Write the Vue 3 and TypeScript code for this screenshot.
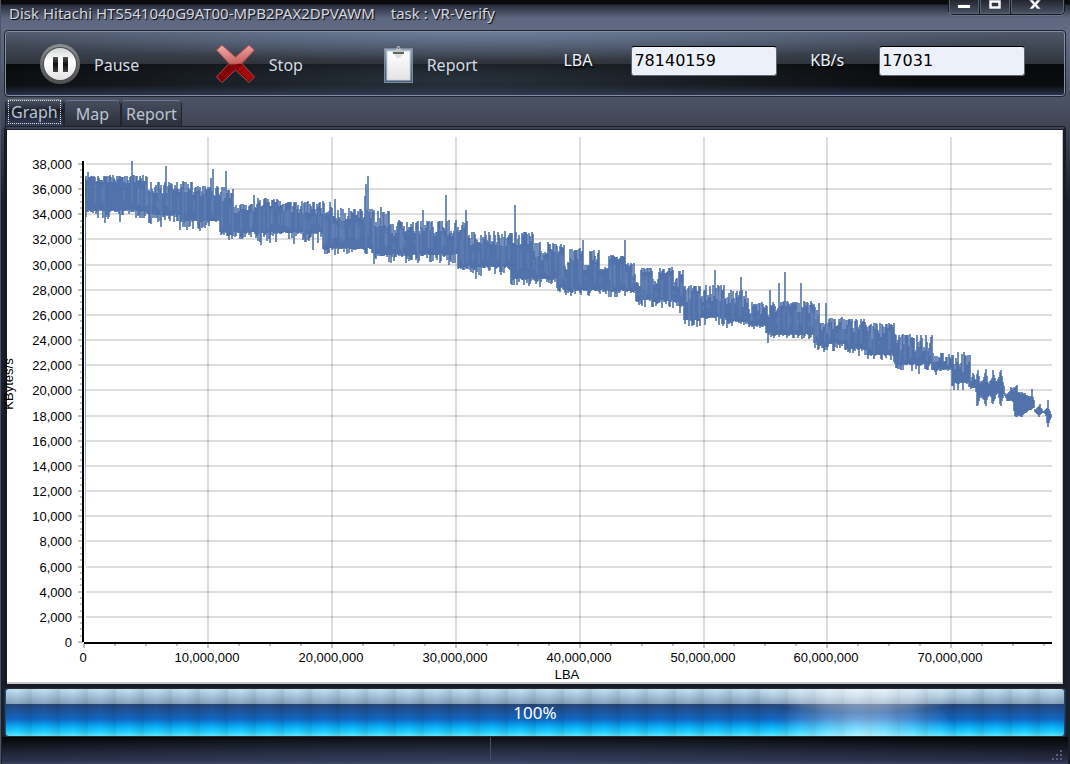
<script setup lang="ts">
import { ref } from 'vue'

type Span = [from: number, to: number, top: number, bottom: number, topNoise: number, bottomNoise: number]
type Bar = [x: number, top: number, bottom: number]

const lba = ref('78140159')
const speed = ref('17031')
const tabs = ['Graph', 'Map', 'Report']
const activeTab = ref('Graph')
const progress = ref(100)

const originX = 77
const baseline = 512
const unitY = 12.58
const unitX = 12.39

const yTicks = Array.from({ length: 20 }, (_, i) => ({
  label: (i * 2000).toLocaleString('en-US'),
  y: Math.round(baseline - i * 2 * unitY),
}))
const xTicks = Array.from({ length: 8 }, (_, i) => ({
  label: (i * 10000000).toLocaleString('en-US'),
  x: Math.round(originX + i * 10 * unitX),
}))
const yMinor = Array.from({ length: 77 }, (_, i) => Math.round(baseline - (i * unitY) / 2))
const xMinor = Array.from({ length: 32 }, (_, i) => Math.round(originX + i * 2.5 * unitX))

const spans: Span[] = [
  [79, 141, 45, 81, 8, 9],
  [141, 173, 51, 85, 14, 10],
  [173, 186, 51, 91, 12, 10],
  [186, 213, 56, 91, 11, 10],
  [213, 222, 56, 103, 15, 6],
  [222, 227, 59, 105, 15, 6],
  [227, 250, 73, 103, 13, 8],
  [250, 272, 68, 103, 9, 11],
  [272, 316, 71, 103, 14, 12],
  [316, 325, 71, 119, 15, 6],
  [325, 367, 78, 119, 14, 7],
  [367, 383, 79, 125, 20, 9],
  [383, 390, 93, 125, 14, 8],
  [390, 451, 90, 125, 17, 9],
  [451, 462, 91, 138, 17, 4],
  [462, 504, 101, 137, 16, 10],
  [504, 527, 101, 149, 16, 8],
  [527, 535, 112, 149, 17, 7],
  [535, 541, 122, 149, 8, 12],
  [541, 550, 112, 149, 14, 6],
  [550, 558, 113, 158, 10, 6],
  [558, 563, 132, 160, 8, 8],
  [563, 576, 118, 160, 12, 7],
  [576, 583, 134, 160, 10, 7],
  [583, 593, 120, 160, 12, 7],
  [593, 602, 137, 160, 3, 6],
  [602, 619, 125, 161, 5, 8],
  [619, 629, 133, 161, 14, 6],
  [629, 634, 146, 172, 10, 7],
  [634, 646, 137, 170, 8, 10],
  [646, 652, 148, 173, 11, 6],
  [652, 667, 137, 171, 7, 8],
  [667, 672, 148, 172, 10, 6],
  [672, 677, 139, 176, 7, 12],
  [677, 694, 155, 190, 18, 9],
  [694, 720, 154, 188, 19, 9],
  [720, 742, 160, 192, 19, 7],
  [742, 759, 172, 196, 14, 5],
  [759, 766, 175, 203, 13, 14],
  [766, 807, 171, 205, 12, 5],
  [807, 813, 172, 213, 18, 9],
  [813, 822, 192, 216, 12, 8],
  [822, 839, 187, 214, 15, 8],
  [839, 860, 188, 219, 15, 8],
  [860, 888, 193, 225, 17, 6],
  [888, 926, 204, 235, 19, 9],
  [926, 945, 222, 240, 13, 6],
  [945, 964, 224, 253, 20, 9],
  [964, 969, 243, 258, 10, 6],
]

const tail: Bar[] = [
  [969, 250, 262], [970, 244, 276], [971, 240, 275], [972, 246, 271], [973, 253, 268], [974, 251, 266],
  [975, 252, 268], [976, 250, 269], [977, 247, 270], [978, 243, 274], [979, 239, 276], [980, 246, 270],
  [981, 252, 267], [982, 254, 266], [983, 251, 265], [984, 250, 267], [985, 248, 273], [986, 240, 274],
  [987, 245, 271], [988, 248, 269], [989, 251, 265], [990, 251, 264], [991, 249, 263], [992, 247, 268],
  [993, 242, 274], [994, 240, 276], [995, 246, 271], [996, 252, 268], [997, 256, 264], [998, 263, 266],
  [999, 265, 268], [1000, 264, 271], [1001, 263, 271], [1002, 262, 271], [1003, 261, 271], [1004, 257, 270],
  [1005, 258, 271], [1006, 260, 272], [1007, 257, 281], [1008, 258, 286], [1009, 256, 287], [1010, 255, 287],
  [1011, 262, 285], [1012, 263, 286], [1013, 262, 286], [1014, 264, 287], [1015, 262, 287], [1016, 263, 285],
  [1017, 264, 284], [1018, 263, 283], [1019, 265, 283], [1020, 265, 282], [1021, 266, 281], [1022, 266, 280],
  [1023, 267, 280], [1024, 266, 280], [1025, 259, 279], [1026, 267, 278], [1027, 270, 278], [1028, 279, 282],
  [1029, 280, 283], [1030, 278, 284], [1031, 277, 285], [1032, 276, 287], [1033, 274, 285], [1034, 278, 284],
  [1035, 279, 283], [1036, 281, 283], [1037, 281, 283], [1038, 280, 284], [1039, 279, 286], [1040, 278, 293],
  [1041, 270, 297], [1042, 279, 293], [1043, 281, 290], [1044, 284, 288],
]

const spikes: Record<number, number> = {
  81: 42, 125: 31, 159: 36, 204: 48, 206: 39, 219: 41, 247: 65, 328: 69, 358: 66, 359: 54, 361: 46, 374: 77,
  416: 80, 439: 65, 459: 80, 508: 75, 576: 110, 618: 110, 708: 140, 734: 147, 763: 160, 772: 153, 778: 142,
  794: 153, 819: 173, 951: 222, 957: 222,
}

const dips: Record<number, number> = {
  98: 93, 113: 92, 154: 97, 173: 100, 186: 99, 193: 101, 222: 110, 233: 109, 254: 115, 287: 114, 306: 120,
  321: 123, 331: 124, 367: 134, 384: 133, 411: 133, 442: 135, 469: 149, 474: 146, 505: 155, 533: 157,
  564: 166, 582: 166, 632: 175, 645: 177, 666: 178, 682: 196, 698: 195, 720: 198, 761: 213, 811: 220,
  826: 221, 852: 226, 887: 232, 893: 239, 912: 244, 951: 260,
}

function noise(seed: number): number {
  const v = Math.sin(seed * 12.9898) * 43758.5453
  return v - Math.floor(v)
}

const bars: Bar[] = []
for (const [from, to, top, bottom, tn, bn] of spans) {
  for (let x = from; x < to; x++) {
    const a = noise(x)
    const b = noise(x + 4000)
    const t = top + (a < 0.3 ? noise(x + 90) * 2 : (a - 0.3) * 1.4 * tn)
    const low = bottom - 1 + (b < 0.5 ? noise(x + 70) * 2 : (b - 0.5) * 2 * bn)
    bars.push([x, Math.round(spikes[x] ?? t), Math.round(dips[x] ?? low)])
  }
}
bars.push(...tail)

function barPath(items: Bar[]): string {
  return items.map(([x, t, b]) => `M${x} ${t}V${b}`).join('')
}
const evenBars = barPath(bars.filter((b) => b[0] % 2 === 0))
const oddBars = barPath(bars.filter((b) => b[0] % 2 === 1))
const streaks = bars
  .filter(([x]) => x < 930 && noise(x + 777) > 0.72)
  .map(([x, t, b]) => `M${x} ${t + 8}V${Math.round(b - 4 - noise(x) * 8)}`)
  .join('')
</script>

<template>
  <main class="window">
    <header class="titlebar">
      <h1 class="title">Disk Hitachi HTS541040G9AT00-MPB2PAX2DPVAWM<span class="task">task : VR-Verify</span></h1>
      <div class="controls">
        <button type="button" class="control" aria-label="Minimize">
          <svg width="14" height="12" viewBox="0 0 14 12"><rect x="0.500" y="4.500" width="13" height="4" fill="#fff" stroke="#3a4052" /></svg>
        </button>
        <button type="button" class="control" aria-label="Maximize">
          <svg width="14" height="12" viewBox="0 0 14 12"><path d="M1 0H13V9H1ZM4 3V6H10V3Z" fill="#fff" fill-rule="evenodd" stroke="#3a4052" stroke-width="0.6" /></svg>
        </button>
        <button type="button" class="control wide" aria-label="Close">
          <svg width="14" height="12" viewBox="0 0 14 12"><path d="M1 0H5L7 2.500L9 0H13L9 4.500L13 9H9L7 6.500L5 9H1L5 4.500Z" fill="#fff" stroke="#3a4052" stroke-width="0.6" /></svg>
        </button>
      </div>
    </header>

    <section class="toolbar">
      <button type="button" class="tool">
        <svg class="icon" width="40" height="40" viewBox="0 0 40 40">
          <defs>
            <linearGradient id="ring" x1="0" y1="0" x2="0" y2="1">
              <stop offset="0" stop-color="#8d9093" />
              <stop offset="0.5" stop-color="#66686a" />
              <stop offset="1" stop-color="#505050" />
            </linearGradient>
            <linearGradient id="disc" x1="0" y1="0" x2="0" y2="1">
              <stop offset="0" stop-color="#d4d6d6" />
              <stop offset="0.4" stop-color="#ffffff" />
              <stop offset="1" stop-color="#e2e2e2" />
            </linearGradient>
            <linearGradient id="slot" x1="0" y1="0" x2="0" y2="1">
              <stop offset="0" stop-color="#555" />
              <stop offset="0.5" stop-color="#111" />
              <stop offset="1" stop-color="#444" />
            </linearGradient>
          </defs>
          <circle cx="20" cy="20" r="20" fill="url(#ring)" />
          <circle cx="20" cy="20" r="17" fill="#4c4e50" />
          <circle cx="20" cy="20" r="16" fill="url(#disc)" />
          <rect x="13" y="13" width="5" height="15" fill="url(#slot)" />
          <rect x="23" y="13" width="5" height="15" fill="url(#slot)" />
        </svg>
        <span class="tool-text">Pause</span>
      </button>

      <button type="button" class="tool">
        <svg class="icon" width="39" height="40" viewBox="0 0 39 40">
          <defs>
            <linearGradient id="cross" x1="0" y1="0" x2="0" y2="1">
              <stop offset="0" stop-color="#e58c8c" />
              <stop offset="0.49" stop-color="#c4494a" />
              <stop offset="0.52" stop-color="#7c0505" />
              <stop offset="0.75" stop-color="#8f0303" />
              <stop offset="1" stop-color="#6d0000" />
            </linearGradient>
            <linearGradient id="sheen" x1="0" y1="0" x2="1" y2="1">
              <stop offset="0" stop-color="#fff" stop-opacity="0.3" />
              <stop offset="1" stop-color="#fff" stop-opacity="0.05" />
            </linearGradient>
          </defs>
          <path d="M6 1L19.500 13L33 1L38.500 6L26 19.500L38.500 33L33 38.500L19.500 26L6 38.500L0.500 33L13 19.500L0.500 6Z" fill="url(#cross)" stroke="#a94f52" />
          <path d="M27 21L37 33L33 37L22 25Z" fill="#b80c0c" opacity="0.7" />
          <path d="M6 2L19.500 14L33 2L37.500 6L25 19L14 22L13.500 19.500L1.500 6Z" fill="url(#sheen)" />
          <path d="M9 24l4 4M6 27l4 4M3 30l5 5M29 24l-4 4M33 28l-4 4" stroke="#3d0000" opacity="0.4" />
        </svg>
        <span class="tool-text">Stop</span>
      </button>

      <button type="button" class="tool report">
        <svg class="icon" width="29" height="38" viewBox="0 0 29 38">
          <defs>
            <linearGradient id="board" x1="0" y1="0" x2="0" y2="1">
              <stop offset="0" stop-color="#9aa9ba" />
              <stop offset="0.5" stop-color="#5d7087" />
              <stop offset="1" stop-color="#465d7b" />
            </linearGradient>
            <linearGradient id="sheet" x1="0" y1="0" x2="0" y2="1">
              <stop offset="0" stop-color="#ffffff" />
              <stop offset="1" stop-color="#e3e3e3" />
            </linearGradient>
          </defs>
          <rect x="0.500" y="3.500" width="28" height="34" fill="url(#board)" stroke="#7a8ba0" />
          <rect x="3" y="6" width="23" height="29" fill="url(#sheet)" stroke="#c9d2dc" />
          <path d="M8.500 8V6L12.500 4.500Q12.500 1 14.500 1Q16.500 1 16.500 4.500L20 6V8Z" fill="#c4c6ca" />
          <circle cx="14.500" cy="3" r="1" fill="#667" />
          <rect x="9" y="7" width="11" height="2" fill="#606367" />
          <path d="M10 9H19L16 13H13Z" fill="#dcdddf" />
        </svg>
        <span class="tool-text">Report</span>
      </button>

      <label class="field-label" for="lba">LBA</label>
      <input id="lba" v-model="lba" class="field" type="text" />
      <label class="field-label" for="speed">KB/s</label>
      <input id="speed" v-model="speed" class="field" type="text" />
    </section>

    <nav class="tabs" role="tablist">
      <button
        v-for="tab in tabs"
        :key="tab"
        type="button"
        role="tab"
        class="tab"
        :class="{ active: tab === activeTab }"
        :aria-selected="tab === activeTab"
        @click="activeTab = tab"
      ><span class="tab-text">{{ tab }}</span></button>
    </nav>

    <section class="panel">
      <svg class="chart" viewBox="0 0 1055 552" role="img" aria-label="Read speed by LBA">
        <g stroke="#000" stroke-opacity="0.13" stroke-width="2">
          <path v-for="t in yTicks.slice(1)" :key="t.y" :d="`M79 ${t.y}H1045`" />
          <path v-for="t in xTicks.slice(1)" :key="t.x" :d="`M${t.x} 7V${baseline}`" />
        </g>
        <g stroke="#c0c0c0" stroke-width="2">
          <path v-for="y in yMinor" :key="y" :d="`M73 ${y}H76`" />
          <path v-for="t in yTicks" :key="t.y" :d="`M71 ${t.y}H76`" />
          <path v-for="x in xMinor" :key="x" :d="`M${x} 513V516`" />
          <path v-for="t in xTicks" :key="t.x" :d="`M${t.x} 513V518`" />
        </g>
        <path d="M76 31V512" stroke="#000" stroke-width="2" />
        <path d="M77 513H1045" stroke="#000" stroke-width="2" />
        <g class="axis-text">
          <text v-for="t in yTicks" :key="t.label" x="65" :y="t.y + 5" text-anchor="end">{{ t.label }}</text>
          <text v-for="t in xTicks" :key="t.label" :x="t.x - 1" y="532" text-anchor="middle">{{ t.label }}</text>
          <text x="560" y="549" text-anchor="middle">LBA</text>
          <text transform="translate(6 254) rotate(-90)" text-anchor="middle">KBytes/s</text>
        </g>
        <defs>
          <linearGradient id="drop" gradientUnits="userSpaceOnUse" x1="0" y1="45" x2="0" y2="436">
            <stop offset="0" stop-color="#4668a6" />
            <stop offset="0.7" stop-color="#4668a6" stop-opacity="0.6" />
            <stop offset="1" stop-color="#4668a6" stop-opacity="0.1" />
          </linearGradient>
        </defs>
        <rect x="78" y="48" width="1" height="388" fill="url(#drop)" />
        <g fill="none" stroke="#4668a6" stroke-width="2">
          <path :d="evenBars" stroke-opacity="0.75" />
          <path :d="oddBars" stroke-opacity="0.75" />
          <path :d="streaks" stroke="#7f9ac6" stroke-opacity="0.45" stroke-width="1" />
        </g>
      </svg>
    </section>

    <div class="progress" role="progressbar" :aria-valuenow="progress" aria-valuemin="0" aria-valuemax="100">
      <div class="bar" :style="{ width: progress + '%' }"></div>
      <span class="percent">{{ progress }}%</span>
    </div>

    <footer class="status">
      <div class="cell"></div>
      <div class="cell"></div>
      <svg class="grip" width="12" height="12" viewBox="0 0 12 12">
        <path d="M8 1h2v2h-2zM4 5h2v2h-2zM8 5h2v2h-2zM0 9h2v2h-2zM4 9h2v2h-2zM8 9h2v2h-2z" fill="#5b6074" />
      </svg>
    </footer>
  </main>
</template>

<style>
body {
  margin: 0;
  background: #1b1f2b;
}
</style>

<style scoped>
.window {
  box-sizing: border-box;
  min-height: 100vh;
  display: flex;
  flex-direction: column;
  padding: 0 4px;
  font-family: "Noto Sans", "Open Sans", sans-serif;
  font-size: 16px;
  background: linear-gradient(#0a0a0c 0, #0a0a0c 4px, #272c3a 5px, #5d667e 18px, #626b84 30px, #4b5364 98px, #3f4454 128px, #1b1f2b 200px, #1b1f2b 100%);
  box-shadow: inset 1px 0 #4a556a;
}

button {
  font: inherit;
  border: 0;
  margin: 0;
  background: none;
  color: inherit;
}

.titlebar {
  height: 30px;
  display: flex;
  justify-content: space-between;
  align-items: flex-start;
}

.title {
  margin: 0;
  padding-left: 5px;
  font-size: 15px;
  font-weight: 400;
  line-height: 26px;
  color: #d3d8e1;
  text-shadow: 1px 1px 1px #000;
  white-space: nowrap;
}

.task {
  margin-left: 16px;
}

.controls {
  display: flex;
  height: 15px;
  box-sizing: border-box;
  margin-right: 1px;
  border: 1px solid #15171e;
  border-top: 0;
  border-radius: 0 0 5px 5px;
  background: linear-gradient(#22252d, #4c5366);
  box-shadow: 0 1px #6c7488;
}

.control {
  width: 31px;
  padding: 0;
  border-right: 1px solid #181b24;
  box-shadow: inset 1px 0 #5a6276, inset -1px -1px #5a6276;
  display: flex;
  justify-content: center;
}

.control.wide {
  width: 53px;
  padding-right: 6px;
  border-right: 0;
  border-radius: 0 0 4px 4px;
}

.toolbar {
  box-sizing: border-box;
  height: 67px;
  padding-left: 35px;
  display: grid;
  grid-template-columns: 176fr 168fr 180fr 68fr 179fr 69fr 186fr;
  align-items: center;
  border: 1px solid #20242e;
  border-radius: 4px;
  box-shadow: inset 0 0 0 1px #858ea4;
  background:
    radial-gradient(ellipse 50% 90% at 45% 0, rgba(130, 155, 190, 0.6), rgba(130, 155, 190, 0) 100%) top / 100% 33px no-repeat,
    radial-gradient(ellipse 45% 130% at 42% 50%, rgba(60, 75, 90, 0.6), rgba(60, 75, 90, 0) 100%) bottom / 100% 32px no-repeat,
    linear-gradient(#4f586c 0, #2f343b 33px, #08090a 33px, #0b0c0e 54px, #2f3858 66px);
}

.tool {
  padding: 0;
  display: flex;
  align-items: center;
  gap: 14px;
  color: #d5dbe4;
  line-height: 24px;
  text-align: left;
}

.tool-text {
  padding-top: 2px;
}

.field-label {
  color: #eef3fb;
  line-height: 24px;
  padding-bottom: 7px;
  text-shadow: 1px 2px 2px #000;
}

.field {
  box-sizing: border-box;
  width: 146px;
  height: 30px;
  margin: 0 0 6px;
  padding: 0 2px;
  font-family: "DejaVu Sans", sans-serif;
  font-size: 16px;
  color: #000;
  background: #ecf0f9;
  border: 1px solid #5e6673;
  border-top-color: #000;
  border-radius: 3px;
}

.tabs {
  height: 29px;
  padding: 2px 0 0 1px;
  box-sizing: border-box;
  display: flex;
  align-items: flex-start;
}

.tab {
  box-sizing: border-box;
  height: 26px;
  margin-top: 1px;
  padding: 0 4px;
  color: #bcc4d2;
  line-height: 26px;
  background: linear-gradient(#464d5d, #2c303c);
  border: 1px solid #20242e;
  border-top-color: #6f788c;
  border-bottom: 0;
  border-radius: 5px 5px 0 0;
}

.tab:nth-child(2) {
  padding: 0 11px;
}

.tab-text {
  display: block;
}

.tab.active {
  height: 28px;
  margin-top: 0;
  padding: 0 2px 3px;
  line-height: 22px;
  background: linear-gradient(#4c5365 0, #272d3b 9px, #161a24 9px, #35405c 100%);
}

.active .tab-text {
  padding: 0 2px;
  border: 1px dotted #e6e0cf;
}

.panel {
  background: #fff padding-box;
  border: 3px solid #161b24;
  border-top: 4px double #1d212b;
  border-radius: 3px;
  box-shadow: inset -1px -2px #c8c8c8;
  padding: 0 1px 2px 0;
}

.chart {
  display: block;
  width: 100%;
  height: auto;
  overflow: visible;
}

.axis-text {
  font-family: "Liberation Sans", Arial, sans-serif;
  font-size: 13px;
  fill: #000;
}

.progress {
  position: relative;
  box-sizing: border-box;
  height: 49px;
  margin-top: 1px;
  border: 1px solid #2b2b2e;
  border-radius: 3px;
  background: #12151c;
}

.bar {
  height: 100%;
  border-radius: 3px;
  background:
    radial-gradient(ellipse 90px 60px at 81% 100%, rgba(255, 255, 255, 0.55), rgba(255, 255, 255, 0) 100%),
    radial-gradient(ellipse 120px 24px at 81% 0, rgba(255, 255, 255, 0.6), rgba(255, 255, 255, 0) 100%),
    repeating-linear-gradient(90deg, rgba(0, 20, 40, 0.05) 0, rgba(0, 20, 40, 0) 12px, rgba(0, 20, 40, 0.12) 26px, rgba(0, 20, 40, 0.05) 28px),
    linear-gradient(#c4e4f6 0, #88a4bf 15px, #28467a 15px, #1268c6 30px, #08b4fc 38px, #20ccff 42px, #62e6ff 100%);
  box-shadow: inset 1px 0 #0c4f8d, inset -1px 0 #0c4f8d;
}

.percent {
  position: absolute;
  inset: 0;
  color: #fff;
  font-size: 17px;
  line-height: 48px;
  text-align: center;
}

.status {
  flex: 1;
  min-height: 25px;
  margin: 0 -2px;
  display: grid;
  grid-template-columns: 489fr 561fr 16px;
  align-items: stretch;
  background:
    radial-gradient(ellipse 60% 120% at 45% 100%, rgba(70, 90, 130, 0.45), rgba(70, 90, 130, 0)),
    linear-gradient(#060708, #282d44 90%, #3b4060);
}

.cell:first-child {
  border-right: 1px solid #4a4f5c;
  margin-bottom: 4px;
}

.grip {
  align-self: end;
  margin-bottom: 3px;
}
</style>
